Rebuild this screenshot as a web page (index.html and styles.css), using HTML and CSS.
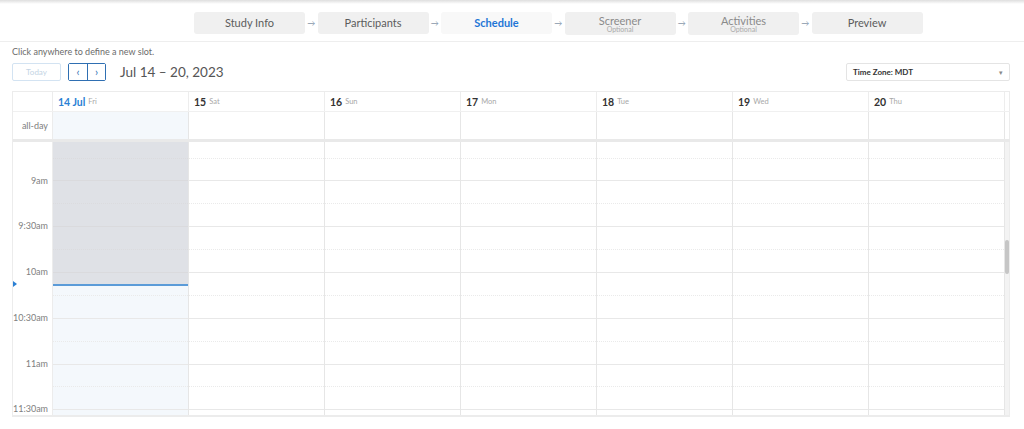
FILE: index.html
```html
<!DOCTYPE html>
<html lang="en">
<head>
  <meta charset="UTF-8">
  <meta name="viewport" content="width=device-width, initial-scale=1.0">
  <title>Schedule</title>
  <link rel="stylesheet" href="styles.css">
</head>
<body>
  <div class="topbar"></div>

  <div class="stepper">
    <div class="step">Study Info</div>
    <div class="arrow">&rarr;</div>
    <div class="step">Participants</div>
    <div class="arrow">&rarr;</div>
    <div class="step active">Schedule</div>
    <div class="arrow">&rarr;</div>
    <div class="step optional">Screener<span>Optional</span></div>
    <div class="arrow">&rarr;</div>
    <div class="step optional">Activities<span>Optional</span></div>
    <div class="arrow">&rarr;</div>
    <div class="step">Preview</div>
  </div>

  <div class="page">
    <p class="hint">Click anywhere to define a new slot.</p>

    <div class="toolbar">
      <button class="btn-today">Today</button>
      <div class="nav">
        <button>&lsaquo;</button>
        <button>&rsaquo;</button>
      </div>
      <h2 class="range">Jul 14 &ndash; 20, 2023</h2>
      <div class="tz">Time Zone: MDT<span class="caret">&#9662;</span></div>
    </div>

    <div class="calendar">
      <div class="row head" id="headRow">
        <div class="gutter"></div>
      </div>
      <div class="row allday" id="alldayRow">
        <div class="gutter">all-day</div>
      </div>
      <div class="divider"></div>
      <div class="row body" id="bodyRow">
        <div class="gutter labels" id="labels">
          <div class="lead"></div>
          <span class="now-arrow"></span>
        </div>
      </div>
    </div>
  </div>

  <script>
    const days = [
      { num: "14 Jul", name: "Fri", today: true },
      { num: "15", name: "Sat" },
      { num: "16", name: "Sun" },
      { num: "17", name: "Mon" },
      { num: "18", name: "Tue" },
      { num: "19", name: "Wed" },
      { num: "20", name: "Thu" }
    ];
    const labels = ["9am", "9:30am", "10am", "10:30am", "11am", "11:30am"];

    const head = document.getElementById("headRow");
    const allday = document.getElementById("alldayRow");
    const body = document.getElementById("bodyRow");
    const gutter = document.getElementById("labels");

    labels.forEach(t => {
      const l = document.createElement("div");
      l.className = "label";
      l.textContent = t;
      gutter.appendChild(l);
    });

    days.forEach(d => {
      const h = document.createElement("div");
      h.className = "day" + (d.today ? " today" : "");
      h.innerHTML = `<b>${d.num}</b> <small>${d.name}</small>`;
      head.appendChild(h);

      const a = document.createElement("div");
      a.className = "day" + (d.today ? " today" : "");
      allday.appendChild(a);

      const col = document.createElement("div");
      col.className = "day" + (d.today ? " today" : "");
      let html = `<div class="lead"></div>`;
      for (let i = 0; i < 12; i++) {
        html += `<div class="slot ${i % 2 ? "major" : "minor"}"></div>`;
      }
      if (d.today) html += `<div class="past"></div>`;
      col.innerHTML = html;
      body.appendChild(col);
    });

    [head, allday].forEach(r => {
      const s = document.createElement("div");
      s.className = "scroll";
      r.appendChild(s);
    });
    const track = document.createElement("div");
    track.className = "scroll track";
    track.innerHTML = `<div class="thumb"></div>`;
    body.appendChild(track);
  </script>
</body>
</html>
```

FILE: styles.css
```css
* {
  box-sizing: border-box;
}
body {
  margin: 0;
  font-family: Lato, "Open Sans", Arial, sans-serif;
  color: #333;
  background: #fff;
}
.topbar {
  height: 4px;
  background: linear-gradient(#dedede, #fff);
}

/* stepper */
.stepper {
  display: flex;
  align-items: center;
  height: 38px;
  padding-left: 194px;
  border-bottom: 1px solid #eee;
}
.step {
  width: 111px;
  height: 22px;
  background: #f0f0f0;
  border-radius: 3px;
  display: flex;
  flex-direction: column;
  align-items: center;
  justify-content: center;
  font-size: 11px;
  color: #5c5c5c;
}
.step.active {
  background: #f8f8f8;
  color: #1f76d6;
  font-weight: bold;
}
.step.optional {
  height: 23px;
  margin-top: 2px;
  color: #8a8a8a;
  line-height: 10px;
  padding-top: 1px;
}
.step.optional span {
  font-size: 7px;
  line-height: 7px;
  color: #aaa;
}
.arrow {
  width: 12.5px;
  text-align: center;
  font-size: 8px;
  color: #8797aa;
}

.page {
  padding: 0 14px 0 12px;
}
.hint {
  margin: 4px 0 0;
  font-size: 9px;
  line-height: 12px;
  color: #6b6b6b;
}

/* toolbar */
.toolbar {
  display: flex;
  align-items: center;
  height: 18px;
  margin: 5px 0 10px;
}
.toolbar button {
  font-family: inherit;
  background: #fff;
  cursor: pointer;
  padding: 0;
}
.btn-today {
  width: 49px;
  height: 18px;
  border: 1px solid #d3e3f2;
  border-radius: 2px;
  font-size: 8px;
  color: #c4d4e4;
}
.nav {
  display: flex;
  margin-left: 7px;
  border: 1px solid #2f6fb2;
  border-radius: 2px;
  height: 18px;
}
.nav button {
  width: 18px;
  border: none;
  color: #2f6fb2;
  font-size: 11px;
  line-height: 14px;
}
.nav button + button {
  border-left: 1px solid #2f6fb2;
}
.range {
  margin: 0 0 0 14px;
  font-size: 13.5px;
  font-weight: normal;
  color: #555;
}
.tz {
  margin-left: auto;
  width: 164px;
  height: 18px;
  border: 1px solid #e4e4e4;
  border-radius: 2px;
  display: flex;
  align-items: center;
  padding: 0 6px;
  font-size: 8px;
  font-weight: bold;
  color: #333;
}
.caret {
  margin-left: auto;
  font-size: 7px;
  color: #888;
  font-weight: normal;
}

/* calendar */
.calendar {
  border: 1px solid #ececec;
  border-right: none;
}
.row {
  display: flex;
}
.gutter {
  width: 40px;
  flex: none;
  border-right: 1px solid #ececec;
  font-size: 9px;
  color: #808080;
  text-align: right;
  padding-right: 4px;
}
.day {
  width: 136px;
  flex: none;
  border-right: 1px solid #e6e6e6;
}
.scroll {
  width: 5px;
  flex: none;
  border-right: 1px solid #ececec;
}
.head {
  height: 20px;
  border-bottom: 1px solid #f0f0f0;
}
.head .day {
  display: flex;
  align-items: center;
  gap: 3px;
  padding-left: 5px;
  font-size: 10.5px;
  border-right-color: #ededed;
}
.head .day b {
  color: #333;
}
.head .day small {
  font-size: 7.5px;
  color: #a8a8a8;
}
.head .day.today b {
  color: #2a7fd4;
}
.allday {
  height: 27px;
}
.allday .gutter {
  display: flex;
  align-items: center;
  justify-content: flex-end;
}
.allday .today {
  background: #f4f8fc;
}
.divider {
  height: 3px;
  background: #e9e9e9;
}
.body {
  height: 274px;
  overflow: hidden;
  border-bottom: 1px solid #ececec;
}
.lead {
  height: 15.5px;
}
.labels {
  position: relative;
}
.label {
  height: 45.8px;
  line-height: 45.8px;
}
.now-arrow {
  position: absolute;
  left: 0;
  top: 139px;
  border-left: 4px solid #2a7fd4;
  border-top: 3px solid transparent;
  border-bottom: 3px solid transparent;
}
.body .day {
  position: relative;
}
.body .today {
  background: #f4f8fc;
}
.slot {
  height: 22.9px;
}
.slot.minor {
  border-top: 1px dotted #eaeaea;
}
.slot.major {
  border-top: 1px solid #e8e8e8;
}
.past {
  position: absolute;
  left: 0;
  right: 0;
  top: 0;
  height: 144px;
  background: rgba(205, 206, 212, 0.55);
  border-bottom: 2px solid #5b9bd8;
}
.track {
  background: #f3f3f3;
  padding-top: 98px;
}
.thumb {
  height: 34px;
  background: #c6c6c6;
  border-radius: 2px;
}
```
